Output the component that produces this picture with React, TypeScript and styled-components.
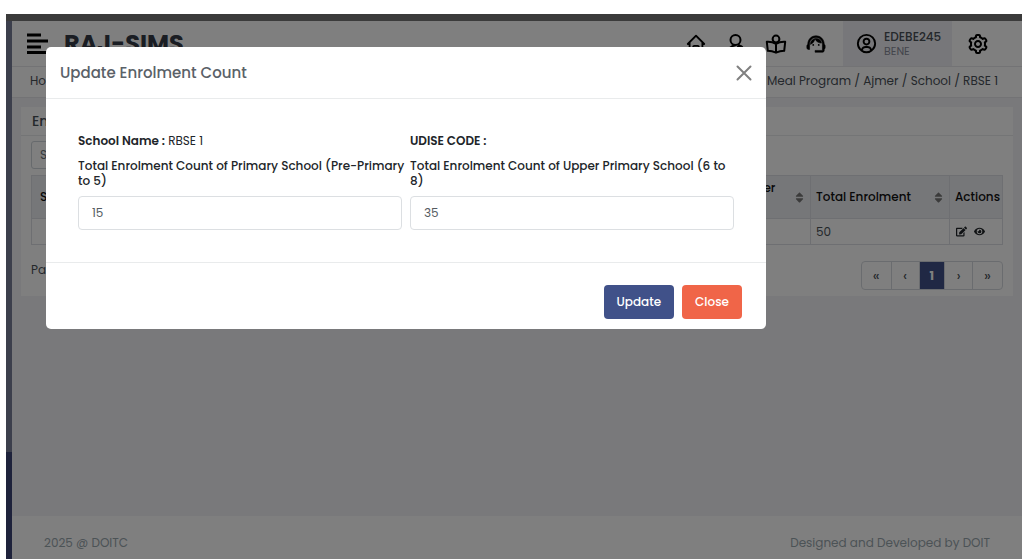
import React from "react";
import styled, { createGlobalStyle } from "styled-components";
import { BiCog, BiHome, BiUserCircle } from "react-icons/bi";
import { MdSupportAgent } from "react-icons/md";
import { FaEdit, FaEye, FaSort } from "react-icons/fa";

const GlobalStyle = createGlobalStyle`
  * { box-sizing: border-box; }
  body {
    margin: 0;
    background: #fff;
    color: #495057;
    font-family: Poppins, Inter, sans-serif;
    font-size: 12px;
    line-height: 18px;
  }
  button, input { font: inherit; color: inherit; }
  a { color: inherit; text-decoration: none; }
`;

const Page = styled.div`
  min-height: 100vh;
  padding: 14px 2px 0 6px;
  display: flex;
`;

const Frame = styled.div`
  position: relative;
  flex: 1;
  min-width: 0;
  display: flex;
  flex-direction: column;
`;

const TopStrip = styled.div`
  height: 7px;
  background: #777;
`;

const Shell = styled.div`
  flex: 1;
  display: flex;
`;

const Sidebar = styled.aside`
  width: 6px;
  background: #3d4577;
  display: flex;
  flex-direction: column;
`;

const SidebarMenu = styled.div`
  height: 80vh;
  max-height: calc(100% - 107px);
  background: #787e98;
`;

const Main = styled.div`
  flex: 1;
  min-width: 0;
  display: flex;
  flex-direction: column;
  background: #f3f3f7;
`;

const Header = styled.header`
  height: 46px;
  display: flex;
  align-items: center;
  padding: 0 24px 0 14px;
  background: #fff;
  border-bottom: 1px solid #e6e6ea;
  color: #000;
`;

const IconButton = styled.button<{ $width?: number }>`
  display: flex;
  align-items: center;
  justify-content: center;
  width: ${({ $width }) => $width ?? 40}px;
  height: 40px;
  padding: 0;
  border: 0;
  background: none;
`;

const Brand = styled.h1`
  flex: 1;
  margin: 0 0 0 16px;
  font-size: 24px;
  line-height: 32px;
  font-weight: 700;
  color: #343a46;
`;

const UserButton = styled.button`
  align-self: stretch;
  display: flex;
  align-items: center;
  gap: 6px;
  width: 109px;
  margin: 0 6px 0 7px;
  padding: 0 0 0 12px;
  border: 0;
  background: #efeff4;
  text-align: left;
`;

const UserText = styled.span`
  display: flex;
  flex-direction: column;
  font-size: 11px;
  line-height: 15px;
  color: #878a99;
`;

const UserName = styled.span`
  font-size: 12px;
  font-weight: 500;
  color: #495057;
`;

const Crumbs = styled.nav`
  display: flex;
  justify-content: space-between;
  padding: 5px 24px 7px 18px;
  background: #fff;
  border-bottom: 1px solid #e6e6ea;
`;

const Card = styled.section`
  margin: 9px 9px 0;
  background: #fff;
`;

const CardTitle = styled.h2`
  margin: 0;
  padding: 5px 11px;
  border-bottom: 1px solid #e9ebec;
  font-size: 14px;
  line-height: 18px;
  font-weight: 500;
`;

const CardBody = styled.div`
  padding: 5px 10px 6px;
`;

const Search = styled.input`
  display: block;
  width: 220px;
  height: 28px;
  margin-bottom: 6px;
  padding: 0 8px;
  border: 1px solid #ced4da;
  border-radius: 3px;
  &::placeholder { color: #6c757d; }
`;

const Table = styled.table`
  width: 100%;
  table-layout: fixed;
  border-collapse: collapse;
`;

const Th = styled.th`
  height: 43px;
  padding: 0 4px 0 5px;
  border: 1px solid #dcdfe4;
  background: #eceef2;
  color: #111;
  font-weight: 500;
  line-height: 18px;
  text-align: left;
`;

const ThInner = styled.div`
  display: flex;
  align-items: center;
  justify-content: space-between;
  & > svg { color: #777; flex: none; }
`;

const Td = styled.td`
  height: 26px;
  padding: 0 5px;
  border: 1px solid #dcdfe4;
`;

const RowActions = styled.div`
  display: flex;
  gap: 5px;
  color: #212529;
`;

const RowAction = styled.button`
  display: flex;
  padding: 0 1px;
  border: 0;
  background: none;
`;

const CardFooter = styled.div`
  display: flex;
  align-items: flex-start;
  justify-content: space-between;
  margin-top: 16px;
`;

const Pager = styled.div`
  display: flex;
  border: 1px solid #d5d9de;
  border-radius: 4px;
`;

const PageButton = styled.button<{ $active?: boolean }>`
  height: 27px;
  min-width: ${({ $active }) => ($active ? 25 : 28)}px;
  padding: 0 ${({ $active }) => ($active ? 10 : 11)}px;
  border: 0;
  border-left: 1px solid #d5d9de;
  background: ${({ $active }) => ($active ? "#405189" : "none")};
  color: ${({ $active }) => ($active ? "#fff" : "#495057")};
  font-size: ${({ $active }) => ($active ? 12 : 15)}px;
  font-weight: ${({ $active }) => ($active ? 700 : 400)};
  &:first-child { border-left: 0; }
`;

const Footer = styled.footer`
  display: flex;
  justify-content: space-between;
  margin-top: auto;
  padding: 18px 32px 7px;
  background: #fff;
  color: #98a6ad;
`;

const Backdrop = styled.div`
  position: absolute;
  inset: 0;
  padding: 33px 40px;
  background: rgba(0, 0, 0, 0.5);
`;

const Modal = styled.div`
  width: 100%;
  max-width: 720px;
  border-radius: 5px;
  background: #fff;
  color: #212529;
`;

const ModalHeader = styled.div`
  display: flex;
  align-items: center;
  justify-content: space-between;
  height: 52px;
  padding: 0 14px;
  border-bottom: 1px solid #e9ebec;
`;

const ModalTitle = styled.h2`
  margin: 0;
  font-size: 15px;
  line-height: 18px;
  font-weight: 500;
  color: #5a6168;
`;

const CloseIcon = styled.button`
  display: flex;
  padding: 0;
  border: 0;
  background: none;
  color: #808080;
`;

const ModalBody = styled.div`
  display: grid;
  grid-template-columns: 1fr 1fr;
  gap: 8px;
  padding: 33px 32px 32px;
`;

const Strong = styled.strong`
  font-weight: 600;
`;

const FieldLabel = styled.label`
  margin-right: -4px;
  font-size: 12px;
  line-height: 15px;
  font-weight: 500;
`;

const Field = styled.input`
  height: 34px;
  min-width: 0;
  padding: 0 13px;
  border: 1px solid #dcdfe2;
  border-radius: 4px;
  background: #fff;
  color: #555b61;
`;

const ModalFooter = styled.div`
  display: flex;
  justify-content: flex-end;
  gap: 8px;
  padding: 22px 24px 10px;
  border-top: 1px solid #e9ebec;
`;

const ActionButton = styled.button<{ $tone: "primary" | "danger" }>`
  height: 34px;
  padding: 0 13px;
  border: 0;
  border-radius: 4px;
  background: ${({ $tone }) => ($tone === "primary" ? "#405189" : "#f06548")};
  color: #fff;
  font-weight: 500;
`;

const MenuIcon = () => (
  <svg width="21" height="21" viewBox="0 0 21 21" stroke="#000" strokeWidth="3">
    <path d="M0 2h14M0 8h21M0 14h14M0 19.5h21" />
  </svg>
);

const UserSearchIcon = () => (
  <svg width="20" height="20" viewBox="0 0 20 20" fill="none" stroke="#000" strokeWidth="2">
    <circle cx="9.500" cy="6" r="5" />
    <path d="M2.500 19c0-4.500 2.500-7.200 7-7.800M12 10.500l2.500 1.500" />
    <circle cx="14" cy="14.500" r="2.500" />
    <path d="M16 16.500l2.500 2.500" />
  </svg>
);

const LibraryIcon = () => (
  <svg width="22" height="20" viewBox="0 0 22 20" fill="none" stroke="#000" strokeWidth="2" strokeLinejoin="round">
    <circle cx="11" cy="5" r="3.4" />
    <path d="M11 9.800C8.500 8.300 5 7.600 1.800 7.800L2.800 16.800C5.500 16.800 8.500 17.500 11 18.700c2.500-1.200 5.500-1.900 8.200-1.900L20.200 7.800C17 7.600 13.500 8.300 11 9.800zM11 9.800v8.900" />
  </svg>
);

const SupportIcon = styled(MdSupportAgent)`
  & path:not([fill="none"]) {
    stroke: currentColor;
    stroke-width: 0.6;
  }
`;

const CrossIcon = () => (
  <svg width="16" height="16" viewBox="0 0 16 16" stroke="currentColor" strokeWidth="2" strokeLinecap="round">
    <path d="M1.500 1.500l13 13M14.500 1.500l-13 13" />
  </svg>
);

const Sortable = ({ children }: { children: React.ReactNode }) => (
  <Th>
    <ThInner>
      <span>{children}</span>
      <FaSort size={13} />
    </ThInner>
  </Th>
);

export default function App() {
  return (
    <Page>
      <GlobalStyle />
      <Frame>
        <TopStrip />
        <Shell>
          <Sidebar>
            <SidebarMenu />
          </Sidebar>
          <Main>
            <Header>
              <IconButton $width={22} aria-label="Menu"><MenuIcon /></IconButton>
              <Brand>RAJ-SIMS</Brand>
              <IconButton aria-label="Home"><BiHome size={22} /></IconButton>
              <IconButton aria-label="Find user"><UserSearchIcon /></IconButton>
              <IconButton aria-label="Library"><LibraryIcon /></IconButton>
              <IconButton aria-label="Support"><SupportIcon size={22} /></IconButton>
              <UserButton>
                <BiUserCircle size={23} />
                <UserText>
                  <UserName>EDEBE245</UserName>
                  <span>BENE</span>
                </UserText>
              </UserButton>
              <IconButton aria-label="Settings"><BiCog size={24} /></IconButton>
            </Header>
            <Crumbs aria-label="Breadcrumb">
              <a href="#home">Home</a>
              <span>Mid Day Meal Program / Ajmer / School / RBSE 1</span>
            </Crumbs>
            <Card>
              <CardTitle>Enrolment Count</CardTitle>
              <CardBody>
                <Search type="search" placeholder="Search" aria-label="Search" />
                <Table>
                  <colgroup>
                    <col width="70" />
                    <col />
                    <col width="230" />
                    <col width="230" />
                    <col width="139" />
                    <col width="53" />
                  </colgroup>
                  <thead>
                    <tr>
                      <Sortable>&nbsp;S.No</Sortable>
                      <Sortable>School Name</Sortable>
                      <Sortable>Total Enrolment Count of Primary School</Sortable>
                      <Sortable>Total Enrolment Count of Upper Primary School</Sortable>
                      <Sortable>Total Enrolment</Sortable>
                      <Th>Actions</Th>
                    </tr>
                  </thead>
                  <tbody>
                    <tr>
                      <Td align="right">1</Td>
                      <Td>RBSE 1</Td>
                      <Td>15</Td>
                      <Td>35</Td>
                      <Td>50</Td>
                      <Td>
                        <RowActions>
                          <RowAction aria-label="Edit"><FaEdit size={11} /></RowAction>
                          <RowAction aria-label="View"><FaEye size={11} /></RowAction>
                        </RowActions>
                      </Td>
                    </tr>
                  </tbody>
                </Table>
                <CardFooter>
                  <span>Page 1 of 1</span>
                  <Pager>
                    <PageButton aria-label="First page">«</PageButton>
                    <PageButton aria-label="Previous page">‹</PageButton>
                    <PageButton $active>1</PageButton>
                    <PageButton aria-label="Next page">›</PageButton>
                    <PageButton aria-label="Last page">»</PageButton>
                  </Pager>
                </CardFooter>
              </CardBody>
            </Card>
            <Footer>
              <span>2025 @ DOITC</span>
              <span>Designed and Developed by DOIT</span>
            </Footer>
          </Main>
        </Shell>
        <Backdrop>
          <Modal role="dialog" aria-modal="true" aria-labelledby="modal-title">
            <ModalHeader>
              <ModalTitle id="modal-title">Update Enrolment Count</ModalTitle>
              <CloseIcon aria-label="Close dialog"><CrossIcon /></CloseIcon>
            </ModalHeader>
            <ModalBody>
              <span><Strong>School Name :</Strong> RBSE 1</span>
              <Strong>UDISE CODE :</Strong>
              <FieldLabel htmlFor="primary">Total Enrolment Count of Primary School (Pre-Primary to 5)</FieldLabel>
              <FieldLabel htmlFor="upper">Total Enrolment Count of Upper Primary School (6 to 8)</FieldLabel>
              <Field id="primary" defaultValue="15" />
              <Field id="upper" defaultValue="35" />
            </ModalBody>
            <ModalFooter>
              <ActionButton $tone="primary">Update</ActionButton>
              <ActionButton $tone="danger">Close</ActionButton>
            </ModalFooter>
          </Modal>
        </Backdrop>
      </Frame>
    </Page>
  );
}
